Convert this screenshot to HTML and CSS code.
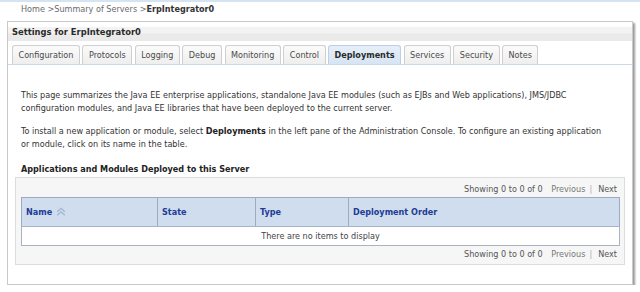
FILE: index.html
```html
<!DOCTYPE html>
<html>
<head>
<meta charset="utf-8">
<link rel="stylesheet" href="styles.css">
</head>
<body>
<div class="topbar"></div>
<div class="breadcrumb">Home &gt;Summary of Servers &gt;<b>ErpIntegrator0</b></div>
<div class="panel">
  <div class="panel-head"><span class="title">Settings for ErpIntegrator0</span></div>
  <div class="tabs">
    <span class="tab">Configuration</span>
    <span class="tab">Protocols</span>
    <span class="tab">Logging</span>
    <span class="tab">Debug</span>
    <span class="tab">Monitoring</span>
    <span class="tab">Control</span>
    <span class="tab active">Deployments</span>
    <span class="tab">Services</span>
    <span class="tab">Security</span>
    <span class="tab">Notes</span>
  </div>
  <div class="content">
    <p>This page summarizes the Java EE enterprise applications, standalone Java EE modules (such as EJBs and Web applications), JMS/JDBC configuration modules, and Java EE libraries that have been deployed to the current server.</p>
    <p class="p2">To install a new application or module, select <b>Deployments</b> in the left pane of the Administration Console. To configure an existing application or module, click on its name in the table.</p>
    <h3>Applications and Modules Deployed to this Server</h3>
    <div class="tablebox">
      <div class="pager">Showing 0 to 0 of 0 <span class="prev">Previous</span><span class="sep">|</span><span class="next">Next</span></div>
      <table>
        <thead>
          <tr>
            <th class="c1">Name <svg class="sort" width="10" height="9" viewBox="0 0 10 9"><path d="M1.2 4.8 L5 1.3 L8.8 4.8 M1.2 8.3 L5 4.8 L8.8 8.3" fill="none" stroke="#a3b5cd" stroke-width="1.3"/></svg></th>
            <th class="c2">State</th>
            <th class="c3">Type</th>
            <th class="c4">Deployment Order</th>
          </tr>
        </thead>
        <tbody>
          <tr><td colspan="4" class="empty">There are no items to display</td></tr>
        </tbody>
      </table>
      <div class="pager">Showing 0 to 0 of 0 <span class="prev">Previous</span><span class="sep">|</span><span class="next">Next</span></div>
    </div>
  </div>
</div>
</body>
</html>
```

FILE: styles.css
```css
html, body {
  margin: 0;
  padding: 0;
  background: #ffffff;
}
body {
  font-family: "DejaVu Sans Condensed", "DejaVu Sans", sans-serif;
  font-size: 9px;
  color: #333333;
}
.topbar {
  height: 2px;
  background: #d5e3f2;
}
.breadcrumb {
  height: 13px;
  padding-top: 1px;
  line-height: 13px;
  padding-left: 21px;
  color: #6a6a6a;
}
.breadcrumb b {
  color: #333;
}
.panel {
  margin: 5px 7px 0 7px;
  height: 262px;
  border: 1px solid #c9c9c9;
  box-shadow: 2px 2px 2px rgba(0,0,0,0.4);
  background: #fff;
}
.panel-head {
  margin-top: 5px;
  height: 14px;
  background: linear-gradient(#f3f3f3 0, #f3f3f3 45%, #e3e3e3 50%, #ebebeb 55%, #e9e9e9 100%);
  padding-left: 4px;
}
.title {
  display: block;
  font-weight: bold;
  font-size: 9.3px;
  line-height: 10px;
  color: #2b2b2b;
}
.tabs {
  display: flex;
  gap: 2.5px;
  margin-top: 4px;
  padding-left: 4px;
  border-bottom: 1px solid #cad9ea;
  height: 19px;
}
.tab {
  display: flex;
  align-items: center;
  padding: 0 5.5px;
  height: 18px;
  border: 1px solid #cfcfcf;
  border-bottom: none;
  border-radius: 3px 3px 0 0;
  background: linear-gradient(#fbfbfb, #eeeeee);
  color: #4a4a4a;
}
.tab.active {
  background: linear-gradient(#e6eff9, #d6e4f3);
  border-color: #bccfe6;
  font-weight: bold;
  color: #2a2a2a;
}
.content {
  padding: 0 7px;
}
.content p {
  margin: 23.5px 14px 0 6px;
  line-height: 13px;
}
.content p.p2 {
  margin-top: 10px;
}
.content p b {
  color: #222;
}
.content h3 {
  margin: 12.5px 6px 0 6px;
  font-size: 9px;
  line-height: 13px;
  color: #222;
}
.tablebox {
  margin-top: 1px;
  border: 1px solid #dcdcdc;
  background: #f6f6f6;
  padding: 5px 4px 3px 5px;
}
.pager {
  text-align: right;
  line-height: 13px;
  padding-right: 3px;
  color: #555;
}
.pager .prev {
  margin-left: 6px;
  color: #777;
}
.pager .sep {
  margin: 0 6px 0 4px;
  color: #aaa;
}
.pager .next {
  color: #555;
}
table {
  width: 100%;
  border-collapse: collapse;
  margin: 1px 0 2px 0;
  background: #fff;
}
th {
  height: 28px;
  padding: 0 4px;
  text-align: left;
  background: #d0ddee;
  color: #203c94;
  font-weight: bold;
  border: 1px solid #9cabc0;
  border-bottom: 1px solid #a7b4c6;
}
th .sort {
  vertical-align: -1px;
  margin-left: 1px;
}
th.c1 { width: 127px; }
th.c2 { width: 89px; }
th.c3 { width: 84px; }
td.empty {
  height: 18px;
  text-align: center;
  border: 1px solid #a9b3c2;
  color: #444;
  padding: 0;
}
```
